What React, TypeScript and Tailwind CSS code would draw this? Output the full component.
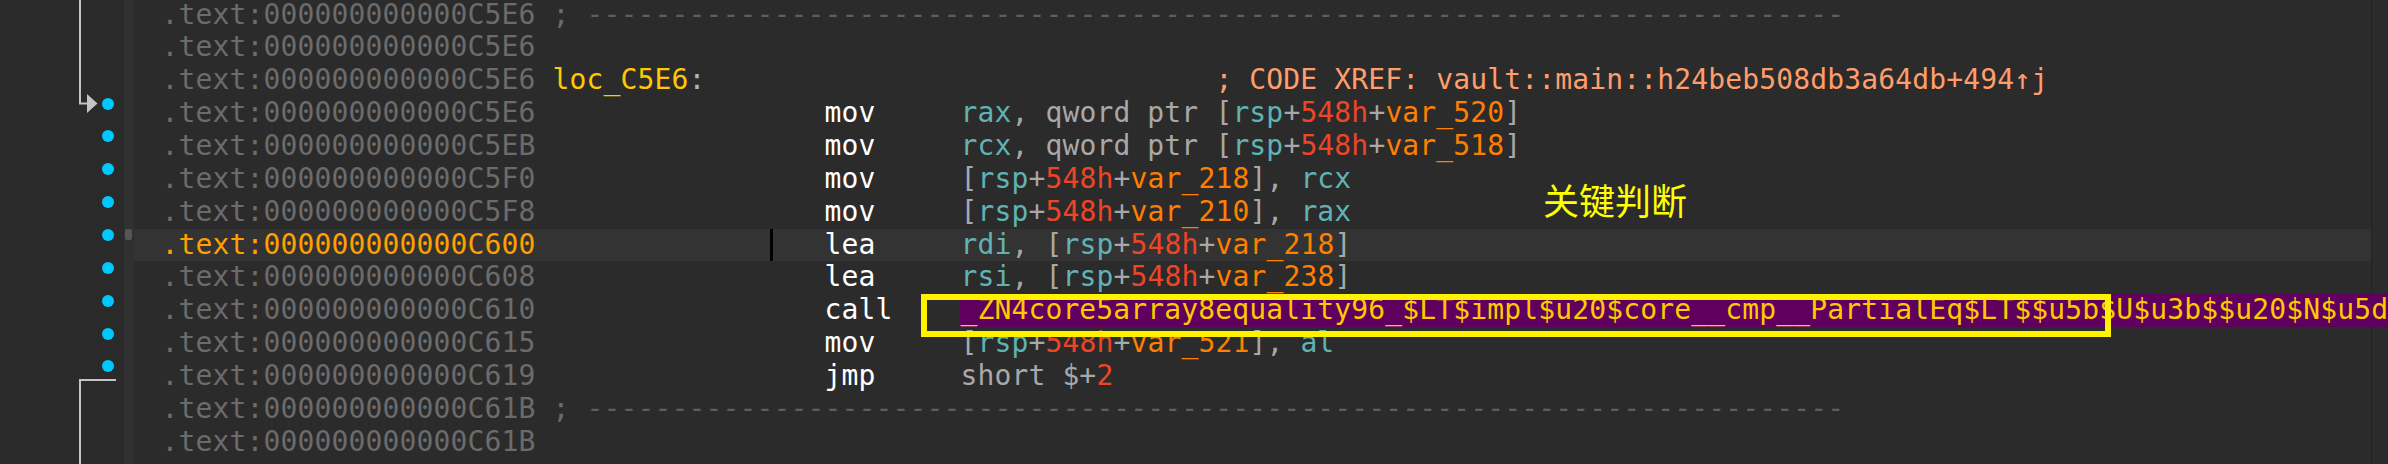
import React from "react";

type Seg = [string, string];

const C = {
  addr: "#6b6b6b",
  hl: "#ffa000",
  loc: "#ffc800",
  colon: "#b4b4b4",
  xref: "#ff9e6b",
  mn: "#ffffff",
  reg: "#5fb3b3",
  gray: "#a8a8a8",
  num: "#ef4527",
  v: "#ff7f00",
  sep: "#5e5e5e",
  call: "#ffc800",
};

const mem = (v: string): Seg[] => [
  ["[", C.gray],
  ["rsp", C.reg],
  ["+", C.gray],
  ["548h", C.num],
  ["+", C.gray],
  [v, C.v],
  ["]", C.gray],
];

const ins = (m: string, ops: Seg[]): Seg[] => [[" ".repeat(17) + m.padEnd(8, " "), C.mn], ...ops];

const dashes = "-".repeat(74);

type Row = { a: string; segs: Seg[]; dot?: boolean; hl?: boolean; call?: boolean };

const rows: Row[] = [
  { a: "C5E6", segs: [[" ; ", C.addr], [dashes, C.sep]] },
  { a: "C5E6", segs: [] },
  {
    a: "C5E6",
    segs: [
      [" ", C.addr],
      ["loc_C5E6", C.loc],
      [":", C.colon],
      [" ".repeat(30), C.addr],
      ["; CODE XREF: vault::main::h24beb508db3a64db+494\u2191j", C.xref],
    ],
  },
  { a: "C5E6", dot: true, segs: ins("mov", [["rax", C.reg], [", qword ptr ", C.gray], ...mem("var_520")]) },
  { a: "C5EB", dot: true, segs: ins("mov", [["rcx", C.reg], [", qword ptr ", C.gray], ...mem("var_518")]) },
  { a: "C5F0", dot: true, segs: ins("mov", [...mem("var_218"), [", ", C.gray], ["rcx", C.reg]]) },
  { a: "C5F8", dot: true, segs: ins("mov", [...mem("var_210"), [", ", C.gray], ["rax", C.reg]]) },
  { a: "C600", dot: true, hl: true, segs: ins("lea", [["rdi", C.reg], [", ", C.gray], ...mem("var_218")]) },
  { a: "C608", dot: true, segs: ins("lea", [["rsi", C.reg], [", ", C.gray], ...mem("var_238")]) },
  { a: "C610", dot: true, call: true, segs: ins("call", []) },
  { a: "C615", dot: true, segs: ins("mov", [...mem("var_521"), [", ", C.gray], ["al", C.reg]]) },
  { a: "C619", dot: true, segs: ins("jmp", [["short $+", C.gray], ["2", C.num]]) },
  { a: "C61B", segs: [[" ; ", C.addr], [dashes, C.sep]] },
  { a: "C61B", segs: [] },
];

const callName =
  "_ZN4core5array8equality96_$LT$impl$u20$core__cmp__PartialEq$LT$$u5b$U$u3b$$u20$N$u5d$$GT$";

export default function App() {
  return (
    <div
      className="relative flex w-[2388px] h-[464px] overflow-hidden bg-[#2b2b2b]"
      style={{ fontFamily: '"DejaVu Sans Mono", "Liberation Mono", monospace' }}
    >
      {/* gutter */}
      <div className="relative w-[124px] shrink-0 bg-[#2a2a2a]">
        <svg className="absolute left-0 top-0" width="124" height="464" viewBox="0 0 124 464">
          <path d="M80 0 V103.5 H88" fill="none" stroke="#c4c4c4" strokeWidth="2" />
          <polygon points="87,94 97.5,103.5 87,113" fill="#c4c4c4" />
          <path d="M116 380 H80 V464" fill="none" stroke="#c4c4c4" strokeWidth="2" />
        </svg>
        <div className="mt-[-1.4px] flex flex-col">
          {rows.map((r, i) => (
            <div key={i} className="h-[32.85px] pl-[102px] pt-[0.5px]">
              {r.dot && <div className="w-[12px] h-[12px] rounded-full bg-[#00c8ff]" />}
            </div>
          ))}
        </div>
      </div>
      {/* marker strip */}
      <div className="w-[10px] shrink-0 bg-[#303030] pt-[229px] pl-[1px]">
        <div className="w-[7px] h-[11px] rounded-[2px] bg-[#555555]" />
      </div>
      {/* listing */}
      <div className="relative flex-1 min-w-0">
        <div className="absolute left-[2237px] top-0 w-[1px] h-full bg-[#222222]" />
        <div className="mt-[-1.4px] flex flex-col">
          {rows.map((r, i) => (
            <div
              key={i}
              className={
                "relative flex items-center h-[32.85px] pl-[27.5px] whitespace-pre text-[28px] leading-[32.85px] tracking-[0.14px] " +
                (r.hl ? "bg-[#333333] mr-[17px]" : "")
              }
            >
              <span style={{ color: r.hl ? C.hl : C.addr }}>{".text:000000000000" + r.a}</span>
              {r.segs.map((s, j) => (
                <span key={j} style={{ color: s[1] }}>
                  {s[0]}
                </span>
              ))}
              {r.call && (
                <span className="relative z-10 bg-[#5f005f] text-[#ffc800]">{callName}</span>
              )}
              {r.hl && <div className="absolute left-[636px] top-0 w-[3px] h-full bg-black" />}
            </div>
          ))}
        </div>
      </div>
      {/* annotations */}
      <div className="absolute left-[921px] top-[294px] w-[1190px] h-[43px] border-[6px] border-[#fff200] z-20" />
      <div
        className="absolute left-[1543px] top-[181px] text-[36px] leading-[36px] text-[#ffff00] z-20"
        style={{ fontFamily: '"Noto Sans CJK SC", "Noto Sans", sans-serif' }}
      >
        关键判断
      </div>
    </div>
  );
}
